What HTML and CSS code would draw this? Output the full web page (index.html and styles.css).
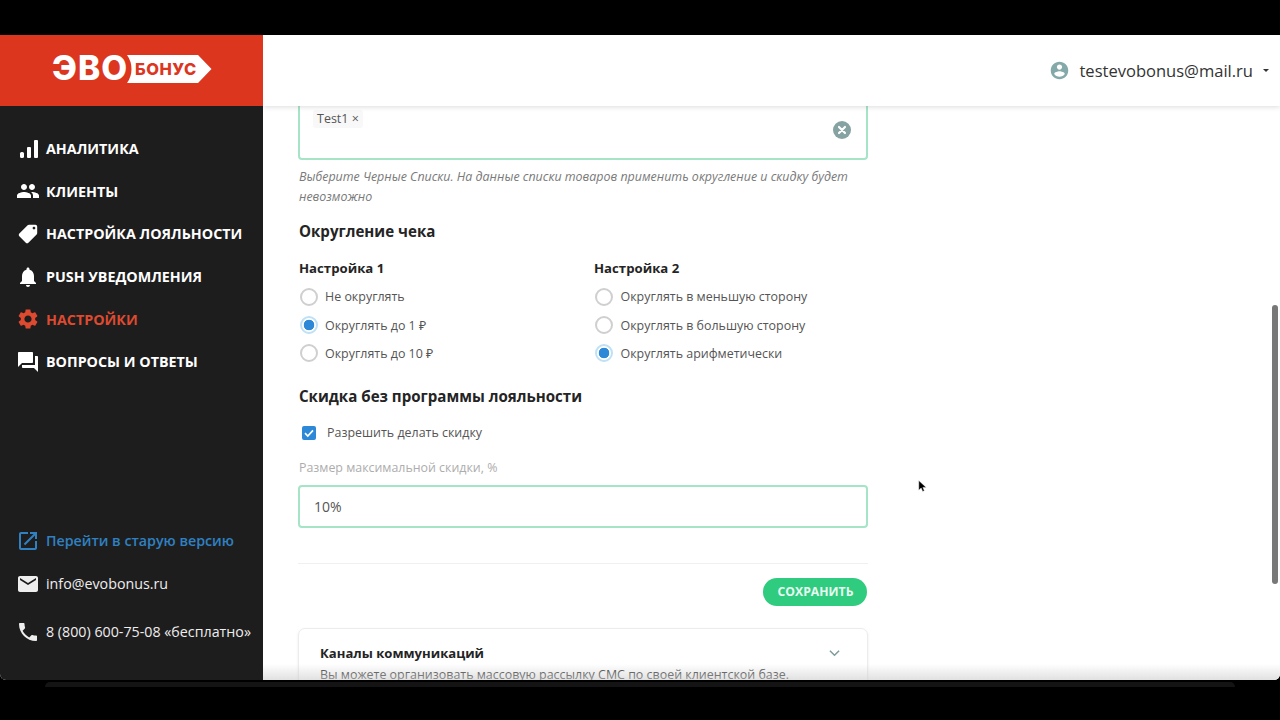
FILE: index.html
```html
<!DOCTYPE html>
<html lang="ru">
<head>
<meta charset="utf-8">
<title>ЭВО Бонус</title>
<link rel="stylesheet" href="styles.css">
</head>
<body>
<div class="frame">
  <aside class="sidebar">
    <div class="logo">
      <span class="logo-evo">ЭВО</span>
      <span class="logo-tag">
        <svg class="logo-shape" viewBox="0 0 85 28"><path d="M0 0H71L84.5 14 71 28H0A24 24 0 0 0 0 0Z" fill="#fff"/></svg>
        <span class="logo-bonus">БОНУС</span>
      </span>
    </div>
    <nav class="nav">
      <a class="nav-item"><svg class="ico" viewBox="0 0 24 24"><rect x="4" y="15" width="4" height="6" rx="1.6"/><rect x="11" y="10" width="4" height="11" rx="1"/><rect x="18" y="3" width="4" height="18" rx="1"/></svg>АНАЛИТИКА</a>
      <a class="nav-item"><svg class="ico" viewBox="0 0 24 24"><path d="M16 11c1.66 0 2.99-1.34 2.99-3S17.66 5 16 5c-1.66 0-3 1.34-3 3s1.34 3 3 3zm-8 0c1.66 0 2.99-1.34 2.99-3S9.66 5 8 5C6.34 5 5 6.34 5 8s1.34 3 3 3zm0 2c-2.33 0-7 1.17-7 3.5V19h14v-2.5c0-2.33-4.67-3.5-7-3.5zm8 0c-.29 0-.62.02-.97.05 1.16.84 1.97 1.97 1.97 3.45V19h6v-2.5c0-2.33-4.67-3.5-7-3.5z"/></svg>КЛИЕНТЫ</a>
      <a class="nav-item"><svg class="ico ico-flip" viewBox="0 0 24 24"><path d="M21.41 11.58l-9-9C12.05 2.22 11.55 2 11 2H4c-1.1 0-2 .9-2 2v7c0 .55.22 1.05.59 1.42l9 9c.36.36.86.58 1.41.58.55 0 1.05-.22 1.41-.59l7-7c.37-.36.59-.86.59-1.41 0-.55-.23-1.06-.59-1.42zM5.5 7C4.67 7 4 6.33 4 5.5S4.67 4 5.5 4 7 4.67 7 5.5 6.33 7 5.5 7z"/></svg>НАСТРОЙКА ЛОЯЛЬНОСТИ</a>
      <a class="nav-item"><svg class="ico" viewBox="0 0 24 24"><path d="M12 22c1.1 0 2-.9 2-2h-4c0 1.1.89 2 2 2zm6-6v-5c0-3.07-1.64-5.64-4.5-6.32V4c0-.83-.67-1.5-1.5-1.5s-1.5.67-1.5 1.5v.68C7.63 5.36 6 7.92 6 11v5l-2 2v1h16v-1l-2-2z"/></svg>PUSH УВЕДОМЛЕНИЯ</a>
      <a class="nav-item nav-active"><svg class="ico" viewBox="0 0 24 24"><path d="M19.14 12.94c.04-.3.06-.61.06-.94 0-.32-.02-.64-.07-.94l2.03-1.58c.18-.14.23-.41.12-.61l-1.92-3.32c-.12-.22-.37-.29-.59-.22l-2.39.96c-.5-.38-1.03-.7-1.62-.94l-.36-2.54c-.04-.24-.24-.41-.48-.41h-3.84c-.24 0-.43.17-.47.41l-.36 2.54c-.59.24-1.13.57-1.62.94l-2.39-.96c-.22-.08-.47 0-.59.22L2.74 8.87c-.12.21-.08.47.12.61l2.03 1.58c-.05.3-.09.63-.09.94s.02.64.07.94l-2.03 1.58c-.18.14-.23.41-.12.61l1.92 3.32c.12.22.37.29.59.22l2.39-.96c.5.38 1.03.7 1.62.94l.36 2.54c.05.24.24.41.48.41h3.84c.24 0 .44-.17.47-.41l.36-2.54c.59-.24 1.13-.56 1.62-.94l2.39.96c.22.08.47 0 .59-.22l1.92-3.32c.12-.22.07-.47-.12-.61l-2.01-1.58zM12 15.6c-1.98 0-3.6-1.62-3.6-3.6s1.62-3.6 3.6-3.6 3.6 1.62 3.6 3.6-1.62 3.6-3.6 3.6z"/></svg>НАСТРОЙКИ</a>
      <a class="nav-item"><svg class="ico" viewBox="0 0 24 24"><path d="M21 6h-2v9H6v2c0 .55.45 1 1 1h11l4 4V7c0-.55-.45-1-1-1zm-4 6V3c0-.55-.45-1-1-1H3c-.55 0-1 .45-1 1v14l4-4h10c.55 0 1-.45 1-1z"/></svg>ВОПРОСЫ И ОТВЕТЫ</a>
    </nav>
    <div class="side-links">
      <a class="side-link side-old"><svg class="ico" viewBox="0 0 24 24"><path d="M19 19H5V5h7V3H5c-1.11 0-2 .9-2 2v14c0 1.1.89 2 2 2h14c1.1 0 2-.9 2-2v-7h-2v7zM14 3v2h3.59l-9.83 9.83 1.41 1.41L19 6.41V10h2V3h-7z"/></svg>Перейти в старую версию</a>
      <a class="side-link"><svg class="ico" viewBox="0 0 24 24"><path d="M20 4H4c-1.1 0-1.99.9-1.99 2L2 18c0 1.1.9 2 2 2h16c1.1 0 2-.9 2-2V6c0-1.1-.9-2-2-2zm0 4l-8 5-8-5V6l8 5 8-5v2z"/></svg>info@evobonus.ru</a>
      <a class="side-link side-phone"><svg class="ico" viewBox="0 0 24 24"><path d="M6.62 10.79c1.44 2.83 3.76 5.14 6.59 6.59l2.2-2.2c.27-.27.67-.36 1.02-.24 1.12.37 2.33.57 3.57.57.55 0 1 .45 1 1V20c0 .55-.45 1-1 1-9.39 0-17-7.61-17-17 0-.55.45-1 1-1h3.5c.55 0 1 .45 1 1 0 1.25.2 2.45.57 3.57.11.35.03.74-.25 1.02l-2.2 2.2z"/></svg>8 (800) 600-75-08 «бесплатно»</a>
    </div>
  </aside>
  <main class="main">
    <header class="topbar">
      <svg class="avatar" viewBox="0 0 24 24"><path d="M12 2C6.48 2 2 6.48 2 12s4.48 10 10 10 10-4.48 10-10S17.52 2 12 2zm0 3c1.66 0 3 1.34 3 3s-1.34 3-3 3-3-1.34-3-3 1.34-3 3-3zm0 14.2c-2.5 0-4.71-1.28-6-3.22.03-1.99 4-3.08 6-3.08 1.99 0 5.97 1.09 6 3.08-1.29 1.94-3.5 3.22-6 3.22z"/></svg>
      <span class="user-mail">testevobonus@mail.ru</span>
      <span class="caret"></span>
    </header>
    <div class="content">
      <div class="tag-box">
        <span class="chip">Test1 ×</span>
        <svg class="clear" viewBox="0 0 20 20"><circle cx="10" cy="10" r="9"/><path d="M7 7l6 6M13 7l-6 6"/></svg>
      </div>
      <p class="hint">Выберите Черные Списки. На данные списки товаров применить округление и скидку будет невозможно</p>
      <h2 class="title">Округление чека</h2>
      <div class="settings">
        <div class="col">
          <h3 class="sub">Настройка 1</h3>
          <label class="radio"><span class="dot"></span>Не округлять</label>
          <label class="radio"><span class="dot dot-on"></span>Округлять до 1 ₽</label>
          <label class="radio"><span class="dot"></span>Округлять до 10 ₽</label>
        </div>
        <div class="col">
          <h3 class="sub">Настройка 2</h3>
          <label class="radio"><span class="dot"></span>Округлять в меньшую сторону</label>
          <label class="radio"><span class="dot"></span>Округлять в большую сторону</label>
          <label class="radio"><span class="dot dot-on"></span>Округлять арифметически</label>
        </div>
      </div>
      <h2 class="title title-discount">Скидка без программы лояльности</h2>
      <label class="check">
        <svg class="check-box" viewBox="0 0 14 14"><rect width="14" height="14" rx="2"/><path d="M3 7.2l2.8 2.8L11 4.4"/></svg>
        Разрешить делать скидку
      </label>
      <div class="field-label">Размер максимальной скидки, %</div>
      <div class="input">10%</div>
      <hr class="divider">
      <div class="actions"><button class="save">СОХРАНИТЬ</button></div>
      <section class="card">
        <div class="card-head">
          <h3 class="card-title">Каналы коммуникаций</h3>
          <svg class="chev" viewBox="0 0 12 8"><path d="M1 1.5l5 5 5-5"/></svg>
        </div>
        <p class="card-text">Вы можете организовать массовую рассылку СМС по своей клиентской базе.</p>
      </section>
    </div>
    <div class="fade"></div>
    <div class="scroll-thumb"></div>
    <svg class="cursor" viewBox="0 0 12 16"><path d="M1 0v13l3.2-3 2 4.6 2.3-1-2-4.4H11z"/></svg>
  </main>
</div>
<div class="under"></div>
</body>
</html>
```
FILE: styles.css
```css
* { box-sizing: border-box; }
html, body { margin: 0; height: 720px; overflow: hidden; background: #000; }
body { padding-top: 35px; font-family: "Open Sans", "Noto Sans", sans-serif; color: #3c3c3c; }

.frame { display: flex; height: 645px; border-radius: 0 0 6px 6px; overflow: hidden; background: #fff; }
.under { height: 5px; margin: 2px 45px 0 45px; border-radius: 6px 6px 0 0; background: #141414; }

.sidebar { flex: 0 0 263px; display: flex; flex-direction: column; background: #1e1d1e; }
.logo { flex: 0 0 71px; display: flex; align-items: center; padding: 0 0 3px 52px; background: #dc361f; }
.logo-evo { font-family: Inter, sans-serif; font-weight: 800; font-size: 33.5px; line-height: 1; color: #fff; width: 75px; letter-spacing: 1px; white-space: nowrap; }
.logo-tag { position: relative; width: 85px; height: 28px; display: flex; align-items: center; padding-left: 8px; }
.logo-shape { position: absolute; left: 0; top: 0; width: 85px; height: 28px; }
.logo-bonus { position: relative; font-family: Inter, sans-serif; font-weight: 800; font-size: 16.5px; line-height: 1; letter-spacing: .5px; color: #dc361f; }

.ico { flex: none; width: 24px; height: 24px; fill: currentColor; }
.ico-flip { transform: scaleX(-1) scale(.92); }
.nav { padding-top: 21.5px; display: flex; flex-direction: column; }
.nav-item { height: 42.6px; display: flex; align-items: center; gap: 6px; padding-left: 16px; color: #fff; font-weight: 700; font-size: 14.3px; white-space: nowrap; }
.nav-active { color: #dd4a30; }

.side-links { margin-top: auto; padding-bottom: 27px; display: flex; flex-direction: column; }
.side-link { height: 43px; display: flex; align-items: center; gap: 6px; padding-left: 16px; color: #eee; font-size: 14.25px; white-space: nowrap; }
.side-old { color: #2f81c2; font-weight: 600; }
.side-phone { margin-top: 5px; }

.main { position: relative; flex: 1; min-width: 0; overflow: hidden; background: #fff; }
.topbar { position: relative; z-index: 2; height: 71px; display: flex; align-items: center; justify-content: flex-end; padding-right: 11px; background: #fff; box-shadow: 0 1px 5px rgba(0,0,0,.14); }
.avatar { width: 21px; height: 21px; fill: #84a9a9; margin-right: 9px; }
.user-mail { font-size: 16.55px; color: #333; margin-right: 10px; }
.caret { width: 0; height: 0; border: 3px solid transparent; border-top-color: #333; border-bottom: 0; }

.content { width: 605px; padding-left: 35px; margin-top: -8px; }
.tag-box { position: relative; height: 62px; padding: 6px 0 0 13px; border: 2px solid #a6e4c8; border-radius: 4px; }
.chip { display: inline-block; padding: 0 4px; font-size: 12.5px; line-height: 18px; color: #555; background: #f8f8f8; border-radius: 3px; }
.clear { position: absolute; right: 14px; top: 20px; width: 20px; height: 20px; }
.clear circle { fill: #86a2a2; }
.clear path { stroke: #fff; stroke-width: 2.2; stroke-linecap: round; fill: none; }
.hint { margin: 7px 0 0; padding-left: 1px; font-style: italic; font-size: 12.45px; line-height: 20px; color: #7a7a7a; }
.title { margin: 14px 0 0; padding-left: 1px; font-size: 15.1px; line-height: 20px; font-weight: 700; color: #242424; }
.title-discount { margin-top: 18.5px; }

.settings { display: flex; margin-top: 17px; }
.col { flex: 0 0 295px; }
.sub { margin: 0 0 4.5px; padding-left: 1px; font-size: 13.2px; line-height: 20px; font-weight: 700; color: #242424; }
.radio { display: flex; align-items: center; height: 28.4px; padding-left: 2px; font-size: 12.45px; color: #555; }
.dot { flex: none; width: 18px; height: 18px; margin-right: 7px; border: 2px solid #cfcfcf; border-radius: 50%; background: #fff; }
.col + .col .dot { margin-right: 7.5px; }
.dot-on { border-color: #bfe0f5; background: radial-gradient(circle, #2d88d8 0 5px, #fff 5.6px); }

.check { display: flex; align-items: center; height: 20px; margin-top: 16.5px; padding-left: 4px; font-size: 12.45px; color: #555; }
.check-box { width: 14px; height: 14px; margin-right: 11px; }
.check-box rect { fill: #2d88d8; }
.check-box path { fill: none; stroke: #fff; stroke-width: 1.7; }
.field-label { margin-top: 15px; padding-left: 1px; font-size: 12.4px; line-height: 20px; color: #adadad; }
.input { height: 43px; margin-top: 7px; padding-left: 14px; display: flex; align-items: center; font-size: 14px; color: #555; border: 2px solid #a6e4c8; border-radius: 4px; }
.divider { margin: 35px 0 0; border: 0; border-top: 1px solid #f0f0f0; }
.actions { display: flex; justify-content: flex-end; padding-right: 1px; margin-top: 14px; }
.save { width: 104px; height: 28px; padding: 0 0 0 1px; border: 0; border-radius: 14px; font-family: inherit; font-size: 12.2px; font-weight: 700; color: #e8fbf1; background: #2fcb7f; }
.card { margin-top: 22px; height: 80px; padding: 14px 21px; border: 1px solid #ececec; border-radius: 7px; box-shadow: 0 1px 3px rgba(0,0,0,.08); }
.card-head { display: flex; align-items: center; justify-content: space-between; padding-right: 6px; }
.card-title { margin: 0; font-size: 13.1px; line-height: 20px; font-weight: 700; color: #242424; }
.chev { width: 11px; height: 8px; fill: none; stroke: #7f9b9b; stroke-width: 1.6; }
.card-text { margin: 2px 0 0; font-size: 12.45px; line-height: 20px; color: #3a3a3a; white-space: nowrap; }

.fade { position: absolute; left: 0; right: 0; bottom: 0; height: 16px; background: linear-gradient(rgba(225,225,225,0), rgba(205,205,205,.6)); }
.scroll-thumb { position: absolute; right: 2px; top: 270px; width: 6px; height: 279px; border-radius: 3px; background: #787878; }
.cursor { position: absolute; left: 655px; top: 444px; width: 9px; height: 15px; fill: #000; stroke: #fff; stroke-width: .6; }
```
